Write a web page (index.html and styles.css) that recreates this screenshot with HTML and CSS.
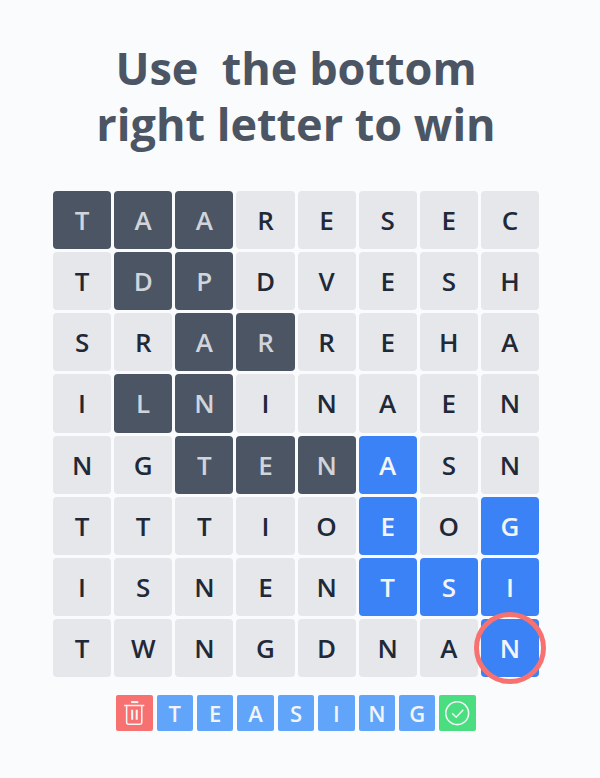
FILE: index.html
```
<!DOCTYPE html>
<html lang="en">
<head>
<meta charset="utf-8">
<meta name="viewport" content="width=device-width, initial-scale=1">
<title>Word puzzle</title>
<link rel="stylesheet" href="styles.css">
</head>
<body>
<main class="game">
<h1 class="title">Use  the bottom
right letter to win</h1>
<div class="board" id="board"></div>
<div class="word" id="word">
<button class="tile clear" type="button" aria-label="Clear word">
<svg class="icon" viewBox="0 0 36 36" fill="none" stroke="currentColor"><path stroke-width="2" d="M15 7h7"/><path stroke-width="1.500" d="M8 10.500h20M10.500 11v16q0 2 2 2h11q2 0 2-2V11"/><path stroke-width="2" d="M16 14.500v10M20.500 14.500v10"/></svg>
</button>
<button class="tile submit" type="button" aria-label="Submit word">
<svg class="icon" viewBox="0 0 36 36" fill="none" stroke="currentColor" stroke-width="1.500"><circle cx="18" cy="18" r="11.300"/><path d="M13 18l4 4 7-7.500"/></svg>
</button>
</div>
</main>
<script src="game.js"></script>
</body>
</html>
```
FILE: styles.css
```
* {
  box-sizing: border-box;
}

body {
  margin: 0;
  background: #f9fbfd;
  font-family: "Open Sans", "Noto Sans", sans-serif;
}

.game {
  max-width: 820px;
  padding: 40px 61px 40px 53px;
}

.title {
  margin: 0 0 39px;
  color: #4b5563;
  font-size: 45px;
  font-weight: 700;
  line-height: 56px;
  text-align: center;
  white-space: pre;
}

.board {
  display: grid;
  grid-template-columns: repeat(8, minmax(0, 1fr));
  gap: 3px;
}

.cell,
.tile {
  display: grid;
  place-items: center;
  aspect-ratio: 1;
  min-width: 0;
  margin: 0;
  padding: 0;
  border: 0;
  font-family: inherit;
  font-weight: 600;
  line-height: 1;
}

.cell {
  position: relative;
  border-radius: 4px;
  background: #e5e7eb;
  color: #1f2937;
  font-size: 26px;
}

.used {
  background: #4b5563;
  color: #d1d5db;
}

.active {
  background: #3b82f6;
  color: #f3f4f6;
}

.goal::after {
  content: "";
  position: absolute;
  inset: -7px;
  border: 5px solid #f87171;
  border-radius: 50%;
}

.word {
  display: grid;
  grid-template-columns: repeat(9, minmax(0, 1fr));
  gap: 4px;
  width: 74%;
  margin: 18px auto 0;
}

.tile {
  border-radius: 2px;
  background: #60a5fa;
  color: #f3f4f6;
  font-size: 22px;
}

.clear {
  background: #f87171;
}

.submit {
  background: #4ade80;
}

.icon {
  display: block;
  width: 100%;
  height: 100%;
}
```
FILE: game.js
```
const rows = ["TAARESEC", "TDPDVESH", "SRARREHA", "ILNINAEN", "NGTENASN", "TTTIOEOG", "ISNENTSI", "TWNGDNAN"];
// u: already used, a: part of the current word, g: goal letter
const states = ["uuu.....", ".uu.....", "..uu....", ".uu.....", "..uuua..", ".....a.a", ".....aaa", ".......g"];
const classes = { u: " used", a: " active", g: " active goal", ".": "" };

const board = document.getElementById("board");
rows.forEach((row, r) => {
  [...row].forEach((letter, c) => {
    const cell = document.createElement("button");
    cell.type = "button";
    cell.className = "cell" + classes[states[r][c]];
    cell.textContent = letter;
    board.append(cell);
  });
});

const word = document.getElementById("word");
for (const letter of "TEASING") {
  const tile = document.createElement("span");
  tile.className = "tile";
  tile.textContent = letter;
  word.insertBefore(tile, word.lastElementChild);
}
```
